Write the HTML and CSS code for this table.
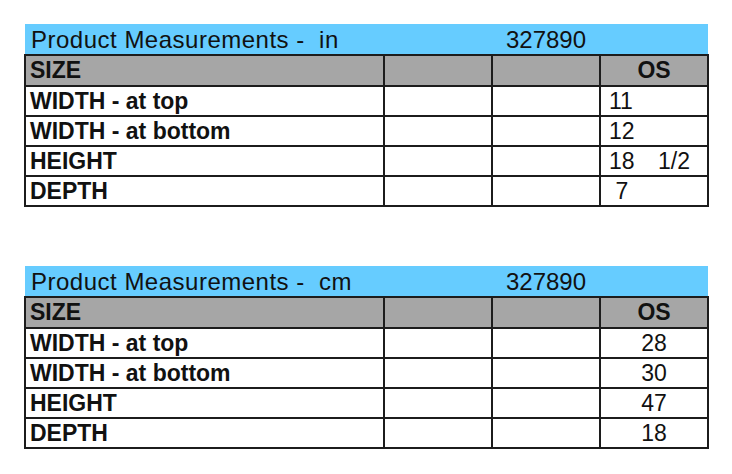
FILE: index.html
```html
<!DOCTYPE html>
<html>
<head>
<meta charset="utf-8">
<link rel="stylesheet" href="styles.css">
</head>
<body>
<div class="page">
  <table class="sheet">
    <colgroup><col class="c1"><col class="c2"><col class="c3"><col class="c4"></colgroup>
    <tr class="title">
      <td class="title-label">Product Measurements -  in</td>
      <td class="title-code" colspan="3">327890</td>
    </tr>
    <tr class="head">
      <td class="label">SIZE</td><td></td><td></td><td class="center">OS</td>
    </tr>
    <tr class="row"><td class="label">WIDTH - at top</td><td></td><td></td><td class="val">11</td></tr>
    <tr class="row"><td class="label">WIDTH - at bottom</td><td></td><td></td><td class="val">12</td></tr>
    <tr class="row"><td class="label">HEIGHT</td><td></td><td></td><td class="val gap">18   1/2</td></tr>
    <tr class="row"><td class="label">DEPTH</td><td></td><td></td><td class="val"> 7</td></tr>
  </table>

  <table class="sheet second">
    <colgroup><col class="c1"><col class="c2"><col class="c3"><col class="c4"></colgroup>
    <tr class="title tall">
      <td class="title-label">Product Measurements -  cm</td>
      <td class="title-code" colspan="3">327890</td>
    </tr>
    <tr class="head">
      <td class="label">SIZE</td><td></td><td></td><td class="center">OS</td>
    </tr>
    <tr class="row"><td class="label">WIDTH - at top</td><td></td><td></td><td class="num">28</td></tr>
    <tr class="row"><td class="label">WIDTH - at bottom</td><td></td><td></td><td class="num">30</td></tr>
    <tr class="row"><td class="label">HEIGHT</td><td></td><td></td><td class="num">47</td></tr>
    <tr class="row"><td class="label">DEPTH</td><td></td><td></td><td class="num">18</td></tr>
  </table>
</div>
</body>
</html>
```

FILE: styles.css
```css
html, body {
  margin: 0;
  padding: 0;
  background: #ffffff;
}

.page {
  padding: 24px 0 0 24px;
  font-family: "Liberation Sans", Arial, sans-serif;
  color: #111111;
}

.sheet {
  border-collapse: collapse;
  table-layout: fixed;
  width: 683px;
}

.second {
  margin-top: 59px;
}

.c1 { width: 359px; }
.c2 { width: 108px; }
.c3 { width: 108px; }
.c4 { width: 108px; }

.sheet td {
  padding: 0;
  white-space: pre;
  vertical-align: middle;
  overflow: hidden;
}

.title td {
  background: #66ccff;
  height: 29px;
  font-size: 24px;
  border: none;
  padding-top: 2px;
  box-sizing: border-box;
}

.title.tall td {
  height: 31px;
}

.title-label {
  padding-left: 6px !important;
  letter-spacing: 0.5px;
}

.title-code {
  text-align: center;
}

.head td,
.row td {
  border: 2px solid #1c1c1c;
}

.head td {
  background: #a6a6a6;
  height: 29px;
  font-size: 23px;
  font-weight: bold;
}

.row td {
  height: 28px;
  font-size: 23px;
  background: #ffffff;
}

.label {
  font-weight: bold;
  padding-left: 4px !important;
}

.center {
  text-align: center;
}

.val {
  padding-left: 8px !important;
}

.gap {
  word-spacing: 1.4px;
}

.num {
  text-align: center;
}
```
